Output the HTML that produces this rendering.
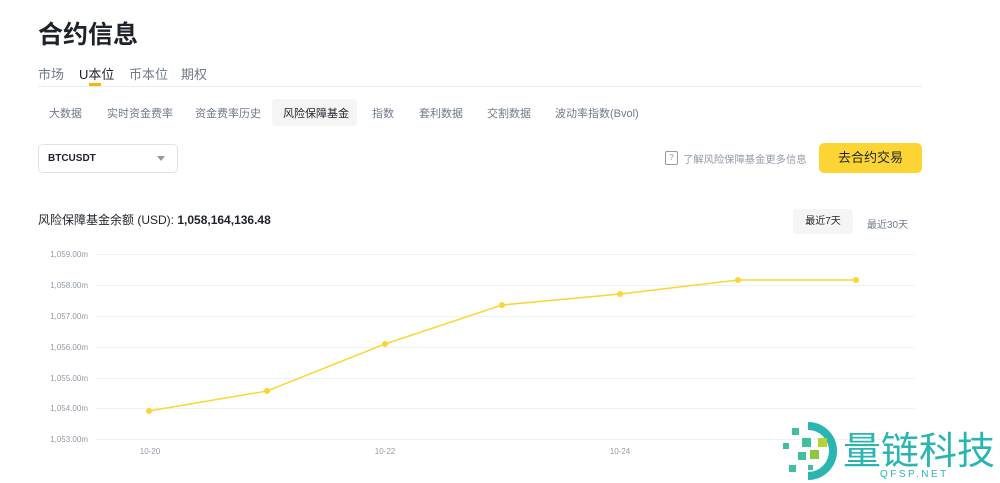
<!DOCTYPE html><html><head><meta charset="utf-8"><style>
body{margin:0;width:1000px;height:483px;background:#fff;font-family:"Liberation Sans","Noto Sans CJK SC",sans-serif;position:relative;overflow:hidden;color:#1e2329}
.a{position:absolute;white-space:nowrap}
</style></head><body>
<div class="a" style="left:38px;top:15px;font-size:25px;font-weight:bold">合约信息</div>
<div class="a" style="left:38px;top:64px;font-size:13px;color:#707a8a">市场</div>
<div class="a" style="left:79px;top:64px;font-size:13px;color:#1e2329">U本位</div>
<div class="a" style="left:89px;top:83px;width:12px;height:3px;background:#f0b90b"></div>
<div class="a" style="left:129px;top:64px;font-size:13px;color:#707a8a">币本位</div>
<div class="a" style="left:181px;top:64px;font-size:13px;color:#707a8a">期权</div>
<div class="a" style="left:38px;top:86px;width:884px;height:1px;background:#eaecef"></div>
<div class="a" style="left:272px;top:99px;width:85px;height:27px;background:#f5f5f5;border-radius:4px"></div>
<div class="a" style="top:105px;font-size:11px;color:#707a8a;left:49px">大数据</div>
<div class="a" style="top:105px;font-size:11px;color:#707a8a;left:107px">实时资金费率</div>
<div class="a" style="top:105px;font-size:11px;color:#707a8a;left:195px">资金费率历史</div>
<div class="a" style="top:105px;font-size:11px;color:#1e2329;left:283px">风险保障基金</div>
<div class="a" style="top:105px;font-size:11px;color:#707a8a;left:372px">指数</div>
<div class="a" style="top:105px;font-size:11px;color:#707a8a;left:419px">套利数据</div>
<div class="a" style="top:105px;font-size:11px;color:#707a8a;left:487px">交割数据</div>
<div class="a" style="top:105px;font-size:11px;color:#707a8a;left:555px">波动率指数(Bvol)</div>
<div class="a" style="left:38px;top:144px;width:138px;height:27px;border:1px solid #e0e3e8;border-radius:5px"></div>
<div class="a" style="left:48px;top:153px;font-size:10px;font-weight:bold">BTCUSDT</div>
<div class="a" style="left:157px;top:156px;width:0;height:0;border-left:4px solid transparent;border-right:4px solid transparent;border-top:5px solid #999"></div>
<div class="a" style="left:665px;top:151px;width:11px;height:12px;border:1px solid #999;border-radius:2px;font-size:8px;color:#999;text-align:center;line-height:11px">?</div>
<div class="a" style="left:683px;top:151px;font-size:10.3px;color:#929aa5">了解风险保障基金更多信息</div>
<div class="a" style="left:819px;top:143px;width:103px;height:30px;background:#fcd535;border-radius:5px;font-size:13px;text-align:center;line-height:30px">去合约交易</div>
<div class="a" style="left:38px;top:211px;font-size:12px">风险保障基金余额 (USD): <b>1,058,164,136.48</b></div>
<div class="a" style="left:793px;top:209px;width:60px;height:25px;background:#f5f5f5;border-radius:4px;font-size:10px;text-align:center;line-height:25px">最近7天</div>
<div class="a" style="left:867px;top:216px;font-size:10px;color:#707a8a">最近30天</div>
<svg class="a" style="left:0;top:0" width="1000" height="483">
<g stroke="#f0f1f2" stroke-width="1">
<line x1="95" x2="915" y1="254.5" y2="254.5"/><line x1="95" x2="915" y1="285.5" y2="285.5"/><line x1="95" x2="915" y1="316.5" y2="316.5"/><line x1="95" x2="915" y1="347.5" y2="347.5"/><line x1="95" x2="915" y1="378.5" y2="378.5"/><line x1="95" x2="915" y1="408.5" y2="408.5"/><line x1="95" x2="915" y1="439.5" y2="439.5"/></g>
<g font-size="8" fill="#929aa5" font-family="Liberation Sans">
<text x="88" y="257" text-anchor="end">1,059.00m</text><text x="88" y="288" text-anchor="end">1,058.00m</text><text x="88" y="319" text-anchor="end">1,057.00m</text><text x="88" y="350" text-anchor="end">1,056.00m</text><text x="88" y="381" text-anchor="end">1,055.00m</text><text x="88" y="411" text-anchor="end">1,054.00m</text><text x="88" y="442" text-anchor="end">1,053.00m</text>
<text x="150" y="454" text-anchor="middle">10-20</text><text x="385" y="454" text-anchor="middle">10-22</text><text x="620" y="454" text-anchor="middle">10-24</text></g>
<polyline fill="none" stroke="#fcd535" stroke-width="1.5" points="149,411 267,391 385,344 502,305 620,294 738,280 856,280"/>
<g fill="#fcd535"><circle cx="149" cy="411" r="3"/><circle cx="267" cy="391" r="3"/><circle cx="385" cy="344" r="3"/><circle cx="502" cy="305" r="3"/><circle cx="620" cy="294" r="3"/><circle cx="738" cy="280" r="3"/><circle cx="856" cy="280" r="3"/></g>
<path d="M808,426 A25,25 0 0 1 808,476" fill="none" stroke="#2bb5b0" stroke-width="8"/>
<g fill="#3fbf9f"><rect x="792" y="428" width="7" height="7"/><rect x="802" y="438" width="9" height="9"/><rect x="783" y="443" width="6" height="6"/><rect x="798" y="452" width="8" height="8"/><rect x="789" y="465" width="7" height="7"/><rect x="810" y="450" width="9" height="9" fill="#8dc63f"/><rect x="818" y="438" width="9" height="9" fill="#b5d433"/><rect x="808" y="465" width="5" height="5"/></g>
<text x="843" y="464" font-size="38" fill="#2bb5b0" font-family="Noto Sans CJK SC">量链科技</text>
<text x="880" y="477" font-size="10" fill="#2bb5b0" letter-spacing="2.5" font-family="Liberation Sans">QFSP.NET</text>
</svg>
</body></html>
